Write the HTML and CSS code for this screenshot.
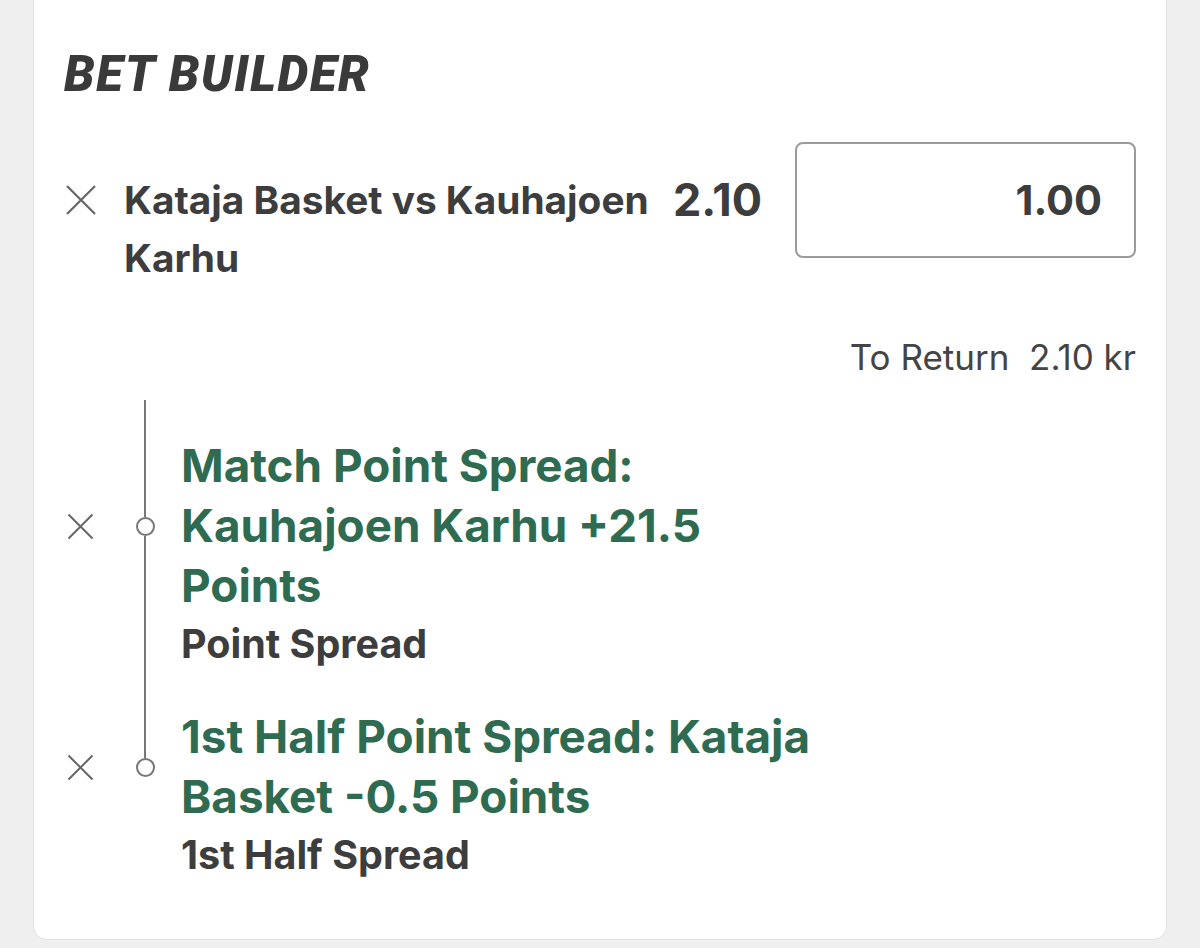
FILE: index.html
```html
<!DOCTYPE html>
<html>
<head>
<meta charset="utf-8">
<link rel="stylesheet" href="styles.css">
</head>
<body>
<div class="card">
  <h1 class="title">BET BUILDER</h1>
  <div class="selection">
    <span class="remove remove-lg">
      <svg viewBox="0 0 32 32" width="32" height="32"><path d="M2 2 L30 30 M30 2 L2 30" stroke="#666" stroke-width="2.2" fill="none"/></svg>
    </span>
    <div class="event">Kataja Basket vs Kauhajoen Karhu</div>
    <div class="odds">2.10</div>
    <div class="stake">1.00</div>
  </div>
  <div class="return">To Return&nbsp; 2.10 kr</div>
  <div class="legs">
    <div class="spacer-x"></div><div class="node-line"></div><div></div>

    <div class="remove-cell">
      <svg viewBox="0 0 27 27" width="27" height="27"><path d="M1.5 1.5 L25.5 25.5 M25.5 1.5 L1.5 25.5" stroke="#666" stroke-width="2" fill="none"/></svg>
    </div>
    <div class="node"><span class="seg"></span><span class="dot"></span><span class="seg"></span></div>
    <div class="leg-title">Match Point Spread: Kauhajoen Karhu +21.5 Points</div>

    <div></div><div class="node-line"></div><div class="leg-sub">Point Spread</div>

    <div></div><div class="node-line gap"></div><div class="gap"></div>

    <div class="remove-cell">
      <svg viewBox="0 0 27 27" width="27" height="27"><path d="M1.5 1.5 L25.5 25.5 M25.5 1.5 L1.5 25.5" stroke="#666" stroke-width="2" fill="none"/></svg>
    </div>
    <div class="node"><span class="seg"></span><span class="dot"></span><span class="seg none"></span></div>
    <div class="leg-title">1st Half Point Spread: Kataja Basket -0.5 Points</div>

    <div></div><div></div><div class="leg-sub">1st Half Spread</div>
  </div>
</div>
</body>
</html>
```

FILE: styles.css
```css
* { box-sizing: border-box; }
html, body {
  margin: 0;
  padding: 0;
  background: #efefef;
}
body {
  font-family: Inter, Roboto, "Liberation Sans", Arial, sans-serif;
  color: #3d3d3d;
}
.card {
  width: 1134px;
  height: 940px;
  margin-left: 33px;
  background: #fff;
  border: 1px solid #e2e2e2;
  border-top: none;
  border-radius: 0 0 14px 14px;
  padding: 46px 30px 0 30px;
}
.title {
  margin: 0;
  font-family: Roboto, "Liberation Sans", Arial, sans-serif;
  font-size: 49px;
  line-height: 57px;
  font-weight: 900;
  font-style: italic;
  color: #3a3a3a;
  letter-spacing: 1.6px;
}
.selection {
  margin-top: 39px;
  display: flex;
  align-items: flex-start;
}
.remove-lg {
  width: 60px;
  flex: 0 0 60px;
  height: 116px;
  display: flex;
  align-items: center;
  padding-left: 1px;
}
.remove-lg svg { display: block; }
.event {
  flex: 1;
  margin-top: 29px;
  font-size: 38.8px;
  line-height: 58px;
  font-weight: 700;
  color: #3d3d3d;
  padding-right: 10px;
}
.odds {
  margin-top: 29px;
  font-size: 45px;
  line-height: 58px;
  font-weight: 700;
  color: #3d3d3d;
  margin-right: 33px;
}
.stake {
  width: 341px;
  height: 116px;
  border: 2px solid #9a9a9a;
  border-radius: 8px;
  font-size: 41.5px;
  font-weight: 700;
  line-height: 112px;
  text-align: right;
  padding-right: 32px;
  color: #3d3d3d;
}
.return {
  margin-top: 50px;
  text-align: right;
  font-size: 35px;
  line-height: 40px;
  color: #444;
}
.legs {
  margin-top: 23px;
  display: grid;
  grid-template-columns: 63px 36px 1fr;
}
.spacer-x { height: 36px; }
.node-line {
  width: 2px;
  background: #777;
  justify-self: center;
}
.node-line.gap { height: 34px; }
.gap { height: 34px; }
.remove-cell {
  display: flex;
  align-items: center;
  padding-left: 3px;
}
.remove-cell svg { display: block; }
.node {
  display: flex;
  flex-direction: column;
  align-items: center;
}
.seg {
  flex: 1;
  width: 2px;
  background: #777;
}
.seg.none { background: transparent; }
.dot {
  width: 19px;
  height: 19px;
  border: 2px solid #777;
  border-radius: 50%;
  background: #fff;
  flex: 0 0 19px;
}
.leg-title {
  padding-left: 18px;
  font-size: 45.8px;
  line-height: 60px;
  font-weight: 700;
  color: #2e6b50;
  max-width: 662px;
}
.leg-sub {
  padding-left: 18px;
  font-size: 39.5px;
  line-height: 57px;
  font-weight: 700;
  color: #3d3d3d;
}
```
